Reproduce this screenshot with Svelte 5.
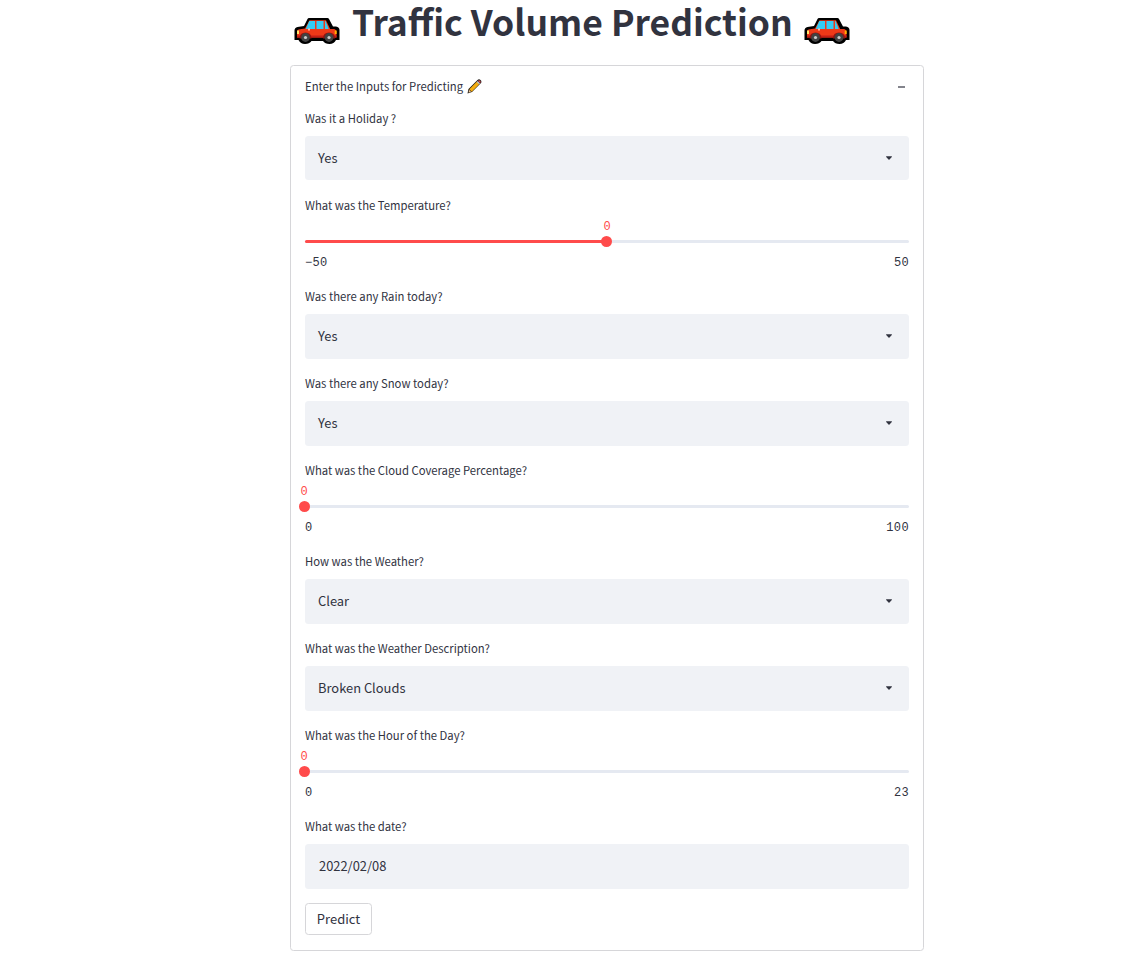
<script>
  const fields = [
    { type: 'select', label: 'Was it a Holiday ?', value: 'Yes' },
    { type: 'slider', label: 'What was the Temperature?', min: '−50', max: '50', value: 0, pct: 50 },
    { type: 'select', label: 'Was there any Rain today?', value: 'Yes' },
    { type: 'select', label: 'Was there any Snow today?', value: 'Yes' },
    { type: 'slider', label: 'What was the Cloud Coverage Percentage?', min: '0', max: '100', value: 0, pct: 0 },
    { type: 'select', label: 'How was the Weather?', value: 'Clear' },
    { type: 'select', label: 'What was the Weather Description?', value: 'Broken Clouds' },
    { type: 'slider', label: 'What was the Hour of the Day?', min: '0', max: '23', value: 0, pct: 0 },
    { type: 'date', label: 'What was the date?', value: '2022/02/08' }
  ];
</script>

{#snippet car()}
  <svg class="car" width="46" height="27" viewBox="0 0 46 27" aria-hidden="true">
    <path d="M15 0h18.500q1 0 1.500 1l4 7.500h3q3.500.5 3.500 3.500V22h-3.500q-2 4-6.500 4T29 23H17.500q-2 3-6.500 3T4.500 22H.500V12.500q0-3 3-3.500L10 8l3.500-7q.5-1 1.500-1z" fill="#000" />
    <path d="M15.500 2.300H32l4.200 8.700h3.300q3 .3 3 3V19.500H3V14q0-2.500 3-2.800l5-.700z" fill="#ee3918" />
    <path d="M3 17.500h39.500v2H3z" fill="#c41e16" />
    <path d="M15.200 3H21V11h-9.200z" fill="#32cdf5" />
    <path d="M22.500 3h7V11h-7zM31 3h.6L34.800 11H31z" fill="#32cdf5" />
    <path d="M3 12.500h2v3.500H3z" fill="#ffe66a" />
    <path d="M40.700 12.500h2V16h-2z" fill="#ffb000" />
    <path d="M14 10.500h2v2h-2z" fill="#f7b7a5" />
    <path d="M5.500 20.500q0-6 6-6t6 6zM29 20.500q0-6 6-6t6 6z" fill="#8f1512" />
    <circle cx="11.500" cy="19.500" r="4.400" fill="#424242" />
    <circle cx="35" cy="19.500" r="4.400" fill="#424242" />
    <circle cx="11.500" cy="19.500" r="1.600" fill="#ccc" />
    <circle cx="35" cy="19.500" r="1.600" fill="#ccc" />
  </svg>
{/snippet}

<main>
  <h1>{@render car()}<span class="title">Traffic Volume Prediction</span>{@render car()}</h1>
  <section class="panel">
    <header>
      <span class="small">Enter the Inputs for Predicting</span>
      <svg class="pencil" width="15" height="15" viewBox="0 0 15 15" aria-hidden="true">
        <path d="M.5 14.500l1-4.500L10.500 1q1.500-1.300 3 0t.5 3L5 13z" fill="#1b1712" />
        <path d="M2.300 10.300l7.700-7.700 2.400 2.400-7.700 7.700z" fill="#f5ad10" />
        <path d="M2.100 10.800l2.100 2.100-2.700.7z" fill="#efc796" />
        <path d="M9.700 2.900l1-1 2.400 2.400-1 1z" fill="#b9c4cc" />
        <path d="M10.900 1.800q1.300-1.200 2.300-.100t0 2.400z" fill="#e04858" />
      </svg>
      <i class="minus"></i>
    </header>
    <div class="fields">
      {#each fields as f}
        <div class="field">
          <div class="label small">{f.label}</div>
          {#if f.type === 'slider'}
            <div class="slider">
              <div class="track">
                <div class="fill" style="width: {f.pct}%"></div>
                <div class="thumb" style="left: {f.pct}%"></div>
                <span class="current" class:start={f.pct === 0} style="left: {f.pct}%">{f.value}</span>
              </div>
              <div class="range"><span>{f.min}</span><span>{f.max}</span></div>
            </div>
          {:else}
            <div class="box" class:date={f.type === 'date'}>
              <span>{f.value}</span>
              {#if f.type === 'select'}
                <svg width="6" height="4" viewBox="0 0 6 4" aria-hidden="true"><path d="M.3.300h5.400q.4.300.1.700L3.500 3.500q-.5.500-1 0L.2 1Q-.1.600.3.300z" fill="#31333f" /></svg>
              {/if}
            </div>
          {/if}
        </div>
      {/each}
      <button>Predict</button>
    </div>
  </section>
</main>

<style>
  :global(body) { background: #fff; }
  main {
    width: 634px;
    height: 960px;
    margin-left: 290px;
    color: #31333f;
    font-family: "Noto Sans CJK SC", "Source Sans Pro", sans-serif;
  }
  h1 {
    display: flex;
    align-items: flex-start;
    height: 65px;
    margin: 0;
    padding-left: 4px;
    box-sizing: border-box;
  }
  .car { flex: none; margin-top: 18px; }
  .title {
    width: 440px;
    margin: 0 12px 0 12px;
    font-size: 35.480px;
    line-height: 42px;
    font-weight: 700;
    white-space: nowrap;
  }
  .panel {
    height: 886px;
    box-sizing: border-box;
    border: 1px solid #d6d6d9;
    border-radius: 3.500px;
    padding: 0 14px;
  }
  header { display: flex; align-items: center; height: 41.500px; }
  header .small { margin-top: -2px; }
  .small { font-size: 11.300px; line-height: 20px; white-space: nowrap; }
  .pencil { margin-left: 4px; }
  .minus { width: 7px; height: 2px; margin: 1px 4px 0 auto; background: #83848c; }
  .fields { display: flex; flex-direction: column; gap: 14px; align-items: stretch; }
  .label { height: 28.500px; line-height: 21px; }
  .box {
    display: flex;
    align-items: center;
    justify-content: space-between;
    height: 44.500px;
    padding: 0 17px 0 13px;
    box-sizing: border-box;
    background: #f0f2f6;
    border-radius: 3.500px;
    font-size: 12.900px;
  }
  .field:first-child .box { height: 44px; margin-bottom: .5px; }
  .box span { margin-top: -2px; }
  .date { padding-left: 14px; }
  .slider { height: 48.500px; padding-top: 17px; box-sizing: border-box; }
  .track { position: relative; height: 3px; background: #e5e9f1; border-radius: 2px; }
  .fill { height: 3px; background: #ff4b4b; border-radius: 2px; }
  .thumb {
    position: absolute;
    top: -4px;
    width: 11px;
    height: 11px;
    margin-left: -5.550px;
    border-radius: 50%;
    background: #ff4b4b;
  }
  .current {
    position: absolute;
    top: -22px;
    transform: translateX(-50%);
    color: #ff4b4b;
    font: 12px/18px "Liberation Mono", monospace;
  }
  .current.start { margin-left: -1px; }
  .range {
    display: flex;
    justify-content: space-between;
    padding-top: 11px;
    font: 12px/18px "Liberation Mono", monospace;
    letter-spacing: .36px;
  }
  button {
    width: 67px;
    height: 32px;
    padding: 0;
    border: 1px solid #d6d6d9;
    border-radius: 3.500px;
    background: #fff;
    color: inherit;
    font-family: inherit;
    font-size: 13px;
    line-height: 30px;
  }
</style>
